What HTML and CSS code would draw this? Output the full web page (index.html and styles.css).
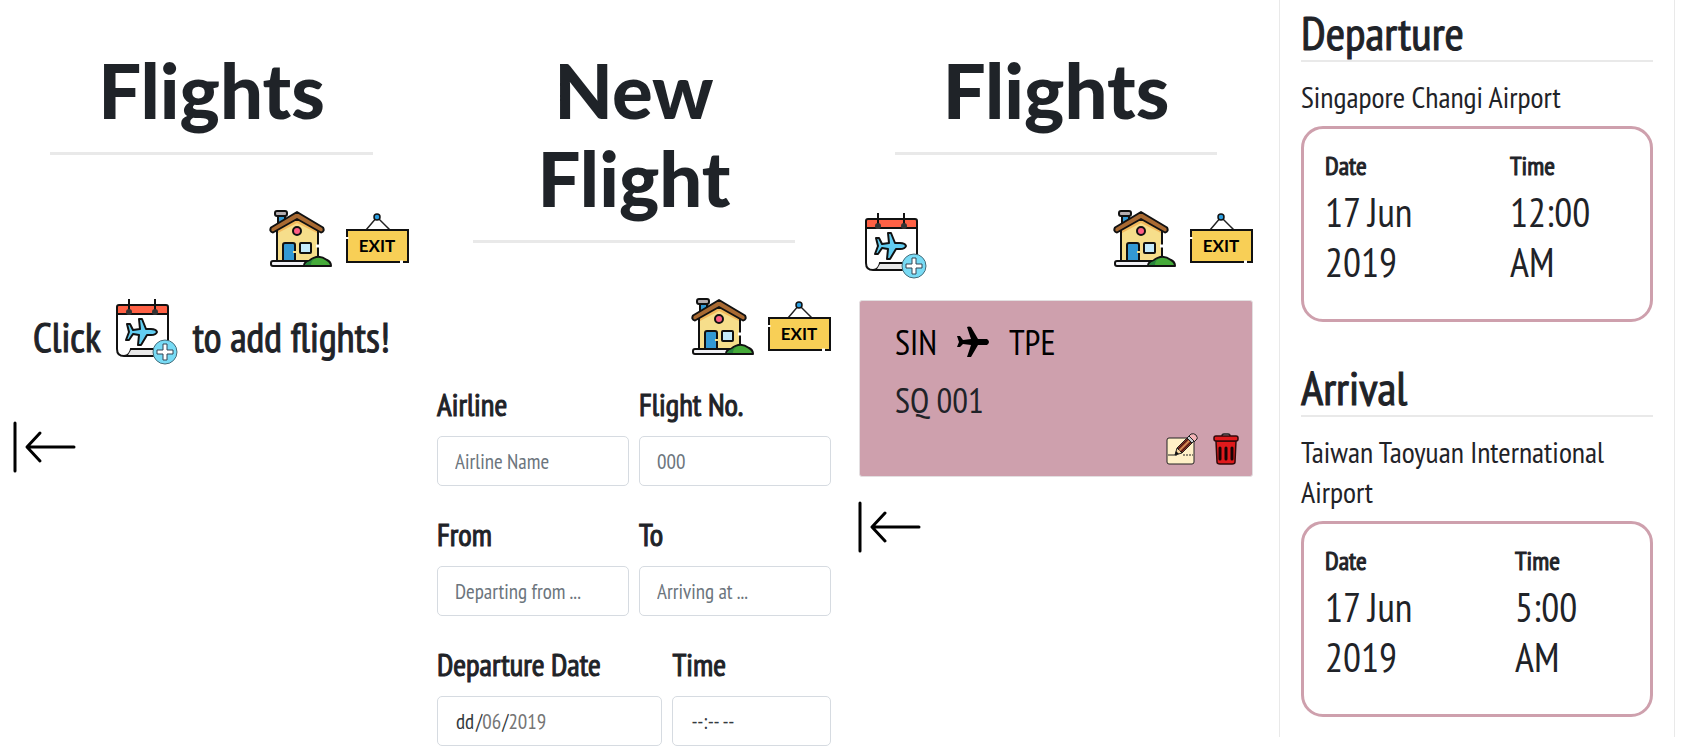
FILE: index.html
```html
<!DOCTYPE html>
<html lang="en">
<head>
<meta charset="utf-8">
<meta name="viewport" content="width=device-width, initial-scale=1">
<title>Flights</title>
<link rel="stylesheet" href="styles.css">
</head>
<body>
<svg class="sprite" aria-hidden="true">
  <symbol id="house" viewBox="0 0 63 60">
    <path d="M9 6h7v10H9z" fill="#3399d4" stroke="#111" stroke-width="2"/>
    <rect x="6" y="2" width="12" height="5" rx="2" fill="#b4adb0" stroke="#111" stroke-width="2"/>
    <path d="M8 18 28 8l21 10v34H8z" fill="#f6de8b" stroke="#111" stroke-width="2"/>
    <path d="M9 21 28 11l20 10v3L28 14 9 24z" fill="#f2b95c"/>
    <path d="M28 3 2 18.500q-2 4 2 5L28 10l24 13.500q4-1 2-5z" fill="#a96a32" stroke="#111" stroke-width="2" stroke-linejoin="round"/>
    <circle cx="28" cy="22" r="4" fill="#ff5d85" stroke="#111" stroke-width="2"/>
    <path d="M14 52V36q0-2 2-2h8q2 0 2 2v16z" fill="#3399d4" stroke="#111" stroke-width="2"/>
    <path d="M24 43h4" stroke="#f6de8b" stroke-width="2"/>
    <rect x="31" y="34" width="11" height="10" rx="1" fill="#c4ebfb" stroke="#111" stroke-width="2"/>
    <path d="M47 37h4" stroke="#fff" stroke-width="3"/>
    <rect x="2" y="52" width="40" height="5" rx="2" fill="#f1f1f5" stroke="#111" stroke-width="2"/>
    <path d="M35 57q0-4 5-5 9-8 18-1 4 2 4 6z" fill="#45aa39" stroke="#111" stroke-width="2" stroke-linejoin="round"/>
    <path d="M36 56q1-3 5-4 3-2 5-3-4 3-4 7z" fill="#29863d"/>
  </symbol>
  <symbol id="exit" viewBox="0 0 63 52">
    <path d="M20 17 31 4l13 13" fill="none" stroke="#222" stroke-width="1.500"/>
    <circle cx="31" cy="4" r="3" fill="#2b9ee0" stroke="#111" stroke-width="1.500"/>
    <rect x="1" y="17" width="61" height="32" fill="#f8cf56" stroke="#111" stroke-width="2"/>
    <path d="M1 24v2M54 49h3" stroke="#fff" stroke-width="3"/>
  </symbol>
  <symbol id="calendar" viewBox="0 0 64 68">
    <path d="M2 9q0-2 2-2h47q2 0 2 2v49H9q-7 0-7-7z" fill="#fff"/>
    <path d="M2 16V9q0-2 2-2h47q2 0 2 2v7z" fill="#ff6145"/>
    <path d="M53 45V9q0-2-2-2H4q-2 0-2 2v42q0 7 7 7h31M2 16h51M9 58q6 0 7-7h25" fill="none" stroke="#111" stroke-width="2"/>
    <path d="M16 52h22v5H13z" fill="#e9e9e9"/>
    <path d="M14 1v13M40 1v13" stroke="#111" stroke-width="2"/>
    <circle cx="14" cy="14" r="3" fill="#333"/><circle cx="40" cy="14" r="3" fill="#333"/>
    <path d="M42 34q-1-3-6-3h-5l-4-10h-3l1 10-7 1-3-6h-3l2 8-3 8h3l4-6 6 1-1 10h3l6-10h4q5 0 6-3z" fill="#62cdf1" stroke="#111" stroke-width="2" stroke-linejoin="round"/>
    <circle cx="50" cy="54" r="12" fill="#78dbf5" stroke="#456b78" stroke-width="1"/>
    <path d="M48 46h4v6h6v4h-6v6h-4v-6h-6v-4h6z" fill="#fff" stroke="#345" stroke-width="1"/>
  </symbol>
  <symbol id="back" viewBox="0 0 64 52">
    <path d="M2 2v48M61 26H15M27 12 14 26l13 14" fill="none" stroke="#000" stroke-width="3" stroke-linecap="round" stroke-linejoin="round"/>
  </symbol>
  <symbol id="plane" viewBox="0 0 32 32">
    <path d="M30 13H21L14 1q-2-1-4 0l4 12-8 1-3-4H0l2 6-2 5h3l3-3 8 1-4 12h4l7-12h9q4-3 0-6z" fill="#000"/>
  </symbol>
  <symbol id="edit" viewBox="0 0 32 32">
    <rect x="1" y="5" width="27" height="26" rx="2" fill="#fff0c7" stroke="#222" stroke-width="1"/>
    <path d="M2 22h9" stroke="#222" stroke-width="1"/>
    <path d="M17 22h10" stroke="#222" stroke-width="1" stroke-dasharray="2 1"/>
    <path d="m9 22 2-7 5 5z" fill="#f7d6a0" stroke="#222" stroke-width="1"/>
    <path d="M11 15 23 3l5 5-12 12z" fill="#8e2f22" stroke="#222" stroke-width="1"/>
    <path d="M12 16 24 4M15 19 27 7" stroke="#3a1c12" stroke-width="1"/>
    <path d="M13.500 17.500 25.500 5.500" stroke="#d9a05e" stroke-width="1.500"/>
    <path d="m22 4 3-3q3-1 5 1 2 3 1 4l-3 3z" fill="#f5b5b8" stroke="#222" stroke-width="1"/>
    <path d="m21 5 5 5 2-2-5-5z" fill="#c9cdd0" stroke="#222" stroke-width="1"/>
    <path d="m9 22 1-4 3 3z" fill="#111"/>
  </symbol>
  <symbol id="trash" viewBox="0 0 26 32">
    <path d="M9 3q0-2 2-2h4q2 0 2 2" fill="none" stroke="#222" stroke-width="1.500"/>
    <path d="M3 8h20l-1 21q0 2-3 2H7q-3 0-3-2z" fill="#df1a1c" stroke="#32080a" stroke-width="1.500"/>
    <rect x="1" y="3" width="24" height="5" rx="2" fill="#df1a1c" stroke="#32080a" stroke-width="1.500"/>
    <path d="M7 15v11M13 15v11M19 15v11" stroke="#180406" stroke-width="3" stroke-linecap="round"/>
  </symbol>
</svg>

<div class="board">
  <main class="screen">
    <h1 class="title">Flights</h1>
    <hr class="rule">
    <nav class="toolbar">
      <a class="tool tool-end" href="#home" aria-label="Home"><svg class="icon-house"><use href="#house"/></svg></a>
      <a class="tool" href="#exit-app"><svg class="icon-exit"><use href="#exit"/><text class="exit-text" x="31" y="39" text-anchor="middle">EXIT</text></svg></a>
    </nav>
    <p class="hint">Click <button class="icon-button" type="button" aria-label="Add flight"><svg class="icon-calendar"><use href="#calendar"/></svg></button> to add flights!</p>
    <a class="back back-empty" href="#back-home" aria-label="Back"><svg class="icon-back"><use href="#back"/></svg></a>
  </main>

  <section class="screen">
    <h1 class="title">New<br>Flight</h1>
    <hr class="rule">
    <nav class="toolbar">
      <a class="tool tool-end" href="#home" aria-label="Home"><svg class="icon-house"><use href="#house"/></svg></a>
      <a class="tool" href="#exit-app"><svg class="icon-exit"><use href="#exit"/><text class="exit-text" x="31" y="39" text-anchor="middle">EXIT</text></svg></a>
    </nav>
    <form class="form">
      <div class="form-row">
        <div class="field"><label for="airline">Airline</label><input class="control" id="airline" type="text" placeholder="Airline Name"></div>
        <div class="field"><label for="number">Flight No.</label><input class="control" id="number" type="text" placeholder="000"></div>
      </div>
      <div class="form-row">
        <div class="field"><label for="from">From</label><input class="control" id="from" type="text" placeholder="Departing from ..."></div>
        <div class="field"><label for="to">To</label><input class="control" id="to" type="text" placeholder="Arriving at ..."></div>
      </div>
      <div class="form-row form-row-date">
        <div class="field">
          <label for="day">Departure Date</label>
          <div class="control date">
            <input class="part part-day" id="day" type="text" value="dd"><span>/</span><input class="part" type="text" value="06" aria-label="Month"><span>/</span><input class="part part-year" type="text" value="2019" aria-label="Year">
          </div>
        </div>
        <div class="field"><label for="time">Time</label><input class="control control-time" id="time" type="text" value="--:-- --"></div>
      </div>
    </form>
  </section>

  <section class="screen">
    <h1 class="title">Flights</h1>
    <hr class="rule">
    <nav class="toolbar">
      <button class="icon-button tool-add" type="button" aria-label="Add flight"><svg class="icon-calendar"><use href="#calendar"/></svg></button>
      <a class="tool tool-end" href="#home" aria-label="Home"><svg class="icon-house"><use href="#house"/></svg></a>
      <a class="tool" href="#exit-app"><svg class="icon-exit"><use href="#exit"/><text class="exit-text" x="31" y="39" text-anchor="middle">EXIT</text></svg></a>
    </nav>
    <article class="card">
      <div class="route"><span>SIN</span><svg class="icon-plane"><use href="#plane"/></svg><span>TPE</span></div>
      <div class="number">SQ 001</div>
      <div class="actions">
        <button class="icon-button" type="button" aria-label="Edit"><svg class="icon-edit"><use href="#edit"/></svg></button>
        <button class="icon-button" type="button" aria-label="Delete"><svg class="icon-trash"><use href="#trash"/></svg></button>
      </div>
    </article>
    <a class="back" href="#back-home" aria-label="Back"><svg class="icon-back"><use href="#back"/></svg></a>
  </section>

  <section class="details">
    <div class="leg">
      <h2 class="leg-title">Departure</h2>
      <p class="airport">Singapore Changi Airport</p>
      <dl class="slot">
        <div><dt>Date</dt><dd>17 Jun<br>2019</dd></div>
        <div><dt>Time</dt><dd>12:00<br>AM</dd></div>
      </dl>
    </div>
    <div class="leg">
      <h2 class="leg-title">Arrival</h2>
      <p class="airport">Taiwan Taoyuan International Airport</p>
      <dl class="slot slot-short">
        <div><dt>Date</dt><dd>17 Jun<br>2019</dd></div>
        <div><dt>Time</dt><dd>5:00<br>AM</dd></div>
      </dl>
    </div>
  </section>
</div>
</body>
</html>
```

FILE: styles.css
```css
* { box-sizing: border-box; }

body {
  margin: 0;
  background: #fff;
  color: #1f2328;
  font-family: "PT Sans Narrow", "Liberation Sans Narrow", "Open Sans Condensed", "Roboto Condensed", "Noto Sans", sans-serif;
}

h1, h2, p, dl, dd { margin: 0; }
svg { display: block; }
.sprite { position: absolute; width: 0; height: 0; }

.board {
  display: grid;
  grid-template-columns: 423fr 422fr 422fr 433fr;
  align-items: start;
}

.screen { padding: 46px 14px 0; }

.title {
  font-family: Lato, sans-serif;
  font-size: 76px;
  font-weight: 900;
  line-height: 88px;
  text-align: center;
}

.rule {
  height: 3px;
  margin: 18px 36px 0;
  border: 0;
  background: #e9e9e9;
}

.toolbar {
  display: flex;
  align-items: flex-start;
  gap: 14px;
  margin-top: 54px;
}
.tool-end { margin-left: auto; }
.tool-add { margin: 3px 0 0 5px; }
.icon-house { width: 63px; height: 60px; }
.icon-exit { width: 63px; height: 52px; margin-top: 4px; }
.icon-calendar { width: 64px; height: 68px; }
.icon-back { width: 64px; height: 52px; }
.icon-plane { width: 32px; height: 32px; }
.icon-edit { width: 32px; height: 32px; }
.icon-trash { width: 26px; height: 32px; }
.exit-text { font-family: Lato, sans-serif; font-size: 17px; font-weight: 700; }

.icon-button {
  padding: 0;
  border: 0;
  background: none;
  cursor: pointer;
}

.hint, .field label, .leg-title, .slot dt {
  font-weight: 400;
  -webkit-text-stroke: 1px currentColor;
}

.hint {
  display: flex;
  justify-content: center;
  align-items: flex-start;
  gap: 14px;
  margin-top: 29px;
  font-size: 41px;
  line-height: 78px;
}

.back { display: inline-block; margin: 24px 0 0 -1px; }
.back-empty { margin-top: 45px; }

.form { margin-top: 27px; }
.form-row {
  display: grid;
  grid-template-columns: 1fr 1fr;
  gap: 10px;
  margin-bottom: 28px;
}
.form-row-date { grid-template-columns: 226fr 159fr; }
.field { min-width: 0; }
.field label {
  display: block;
  margin-bottom: 10px;
  font-size: 31px;
  line-height: 42px;
}
.control {
  display: block;
  width: 100%;
  height: 50px;
  padding: 0 17px;
  border: 1px solid #d6dbe1;
  border-radius: 5px;
  background: #fff;
  color: #343a40;
  font-family: inherit;
  font-size: 21px;
}
.control::placeholder { color: #6c757d; opacity: 1; }
.control-time { padding-left: 18px; }
.date { display: flex; align-items: center; padding-left: 18px; }
.part {
  width: 20px;
  padding: 0;
  border: 0;
  background: none;
  color: #757575;
  font: inherit;
}
.part-day { color: #343a40; }
.part-year { width: 60px; }

.card {
  margin-top: 20px;
  padding: 16px 13px 11px 35px;
  border: 1px solid #e3dfe1;
  border-radius: 3px;
  background: #cea0ad;
  color: #000;
  font-size: 35px;
}
.route { display: flex; align-items: center; gap: 20px; line-height: 50px; }
.number { margin-top: 8px; color: #1f2328; line-height: 50px; }
.actions { display: flex; justify-content: flex-end; gap: 15px; margin-top: 8px; }

.details {
  margin: 0 25px 0 12px;
  padding: 5px 21px 20px;
  border: solid #e9e9e9;
  border-width: 0 1px;
}
.leg + .leg { margin-top: 38px; }
.leg-title {
  border-bottom: 2px solid #e9e9e9;
  font-size: 47px;
  line-height: 55px;
}
.airport {
  margin: 15px 0 9px;
  font-size: 30px;
  line-height: 40px;
}
.slot {
  display: grid;
  grid-template-columns: 185fr 119fr;
  padding: 20px 21px 32px;
  border: 3px solid #cea0ad;
  border-radius: 22px;
}
.slot-short { grid-template-columns: 190fr 114fr; }
.slot dt { margin-bottom: 4px; font-size: 26px; line-height: 34px; }
.slot dd { font-size: 40px; line-height: 50px; }
```
